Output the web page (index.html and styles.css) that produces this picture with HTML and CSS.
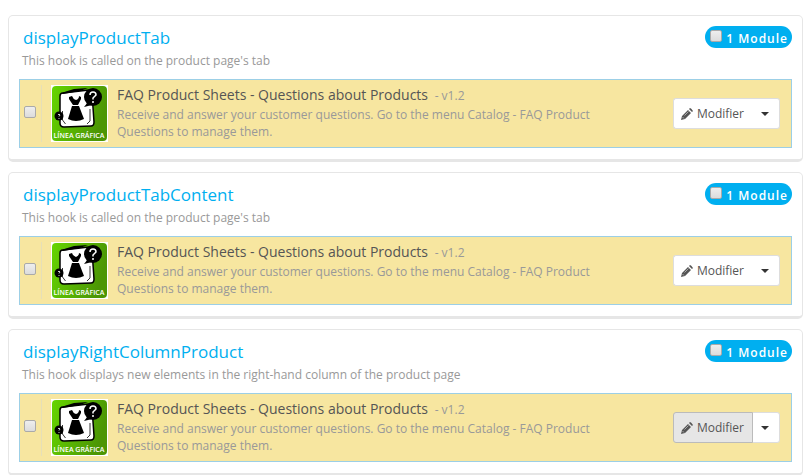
FILE: index.html
```html
<!DOCTYPE html>
<html lang="en">
<head>
    <meta charset="UTF-8">
    <meta name="viewport" content="width=device-width, initial-scale=1.0">
    <title>Positions</title>
    <link rel="stylesheet" href="styles.css">
</head>
<body>
    <!-- shared icons -->
    <svg class="sprite" aria-hidden="true">
        <defs>
            <linearGradient id="logo-green" x1="0" y1="0" x2="1" y2="0.3">
                <stop offset="0" stop-color="#66d500"/>
                <stop offset="1" stop-color="#4c9605"/>
            </linearGradient>
        </defs>
        <symbol id="module-logo" viewBox="0 0 57 57">
            <rect width="57" height="57" fill="#fff"/>
            <rect x="1" y="1" width="55" height="55" rx="4" fill="url(#logo-green)"/>
            <path d="M9 11q0-3 3-3l26-3q3 0 3 3l2 29q0 4-3 4l-27 1q-4 0-4-4z" fill="#fff" stroke="#000" stroke-width="1.5"/>
            <path d="M10 8l13-4 14-1-8 3-17 3z" fill="#000"/>
            <path d="M11.5 26v9l3 4M39 24v12l-3 3" fill="none" stroke="#000" stroke-width="0.8"/>
            <path d="M18 12l3-1q1 3 4 4 3-1 3-4l2 1v2l-3 6h-5l-4-6z"/>
            <path d="M21 21h7l5 13q-8 4-16 0z"/>
            <path d="M37 17l-4 5 8-2z"/>
            <circle cx="42" cy="12" r="9"/>
            <circle cx="8" cy="31" r="4.5"/>
            <path d="M39 10q0-3 3-3 3 0 3 3l-3 3v1.5M42 16v2" fill="none" stroke="#fff" stroke-width="1.5"/>
            <path d="M7 30q1-2 2 0l-1 1.5M8 33v1" fill="none" stroke="#fff" stroke-width="0.8"/>
        </symbol>
        <symbol id="pencil" viewBox="0 0 12 12">
            <path d="M0 12l1-4 6-6 3 3-6 6zM8 1l1-1q1 0 3 3l-1 1z"/>
            <path d="M1.5 9l1.5 1.5M3.5 7.5l4-4" fill="none" stroke="#fff" stroke-width="0.5"/>
        </symbol>
    </svg>

    <main class="hooks">
        <section class="hook-panel">
            <header class="hook-header">
                <h2 class="hook-title"><a href="#">displayProductTab</a></h2>
                <label class="badge"><input type="checkbox"> <span>1 Module</span></label>
            </header>
            <p class="hook-description">This hook is called on the product page's tab</p>
            <div class="module">
                <div class="module-select"><input type="checkbox" aria-label="Select module"></div>
                <svg class="module-logo" viewBox="0 0 57 57"><use href="#module-logo"/><text class="logo-text" x="28" y="53" text-anchor="middle">LÍNEA GRÁFICA</text></svg>
                <div class="module-info">
                    <h3 class="module-name">FAQ Product Sheets - Questions about Products <small>- v1.2</small></h3>
                    <p class="module-description">Receive and answer your customer questions. Go to the menu Catalog - FAQ Product Questions to manage them.</p>
                </div>
                <div class="btn-group">
                    <button type="button" class="btn btn-edit"><svg class="icon"><use href="#pencil"/></svg>Modifier</button>
                    <button type="button" class="btn btn-toggle" aria-label="More actions"><span class="caret"></span></button>
                </div>
            </div>
        </section>

        <section class="hook-panel">
            <header class="hook-header">
                <h2 class="hook-title"><a href="#">displayProductTabContent</a></h2>
                <label class="badge"><input type="checkbox"> <span>1 Module</span></label>
            </header>
            <p class="hook-description">This hook is called on the product page's tab</p>
            <div class="module">
                <div class="module-select"><input type="checkbox" aria-label="Select module"></div>
                <svg class="module-logo" viewBox="0 0 57 57"><use href="#module-logo"/><text class="logo-text" x="28" y="53" text-anchor="middle">LÍNEA GRÁFICA</text></svg>
                <div class="module-info">
                    <h3 class="module-name">FAQ Product Sheets - Questions about Products <small>- v1.2</small></h3>
                    <p class="module-description">Receive and answer your customer questions. Go to the menu Catalog - FAQ Product Questions to manage them.</p>
                </div>
                <div class="btn-group">
                    <button type="button" class="btn btn-edit"><svg class="icon"><use href="#pencil"/></svg>Modifier</button>
                    <button type="button" class="btn btn-toggle" aria-label="More actions"><span class="caret"></span></button>
                </div>
            </div>
        </section>

        <section class="hook-panel">
            <header class="hook-header">
                <h2 class="hook-title"><a href="#">displayRightColumnProduct</a></h2>
                <label class="badge"><input type="checkbox"> <span>1 Module</span></label>
            </header>
            <p class="hook-description">This hook displays new elements in the right-hand column of the product page</p>
            <div class="module">
                <div class="module-select"><input type="checkbox" aria-label="Select module"></div>
                <svg class="module-logo" viewBox="0 0 57 57"><use href="#module-logo"/><text class="logo-text" x="28" y="53" text-anchor="middle">LÍNEA GRÁFICA</text></svg>
                <div class="module-info">
                    <h3 class="module-name">FAQ Product Sheets - Questions about Products <small>- v1.2</small></h3>
                    <p class="module-description">Receive and answer your customer questions. Go to the menu Catalog - FAQ Product Questions to manage them.</p>
                </div>
                <div class="btn-group">
                    <button type="button" class="btn btn-edit active"><svg class="icon"><use href="#pencil"/></svg>Modifier</button>
                    <button type="button" class="btn btn-toggle" aria-label="More actions"><span class="caret"></span></button>
                </div>
            </div>
        </section>
    </main>
</body>
</html>
```
FILE: styles.css
```css
* {
    margin: 0;
    padding: 0;
    box-sizing: border-box;
}

body {
    font-family: "Open Sans", sans-serif;
    font-size: 12px;
    line-height: 17px;
    color: #555;
    background-color: #fff;
    overflow-x: hidden;
}

.sprite {
    position: absolute;
    width: 0;
    height: 0;
}

.hooks {
    display: flex;
    flex-direction: column;
    gap: 10px;
    padding: 15px 0 0 8px;
}

.hook-panel {
    padding: 10px 10px 11px;
    border: 1px solid #e6e6e6;
    border-bottom-width: 3px;
    border-radius: 5px;
}

.hook-header {
    display: flex;
    justify-content: space-between;
    align-items: flex-start;
    padding-left: 4px;
}

.hook-title {
    font-size: 17px;
    font-weight: 400;
    line-height: 24px;
}

.hook-title a {
    color: #00aff0;
    text-decoration: none;
}

.badge {
    display: flex;
    gap: 4px;
    height: 22px;
    padding: 4px 4px 4px 5px;
    border-radius: 11px;
    background-color: #00aff0;
    color: #fff;
    font-weight: 600;
    letter-spacing: 1px;
}

input[type="checkbox"] {
    appearance: none;
    width: 12px;
    height: 12px;
    border: 1px solid #aaa;
    border-radius: 2px;
    background: linear-gradient(#eee, #dcdcdc);
}

.hook-description {
    padding: 2px 3px 10px;
    color: #999;
}

.module {
    display: flex;
    align-items: center;
    padding: 5px 11px 5px 4px;
    border: 1px solid #9ccfe6;
    background-color: #f7e6a0;
}

.module-select {
    display: flex;
    align-items: center;
    align-self: stretch;
    width: 18px;
    padding-bottom: 3px;
    border-right: 1px solid #e6dfb8;
}

.module-logo {
    width: 57px;
    height: 57px;
    margin: 0 9px;
    flex-shrink: 0;
}

.logo-text {
    font-size: 7px;
    font-weight: 600;
    fill: #fff;
}

.module-info {
    flex: 1;
    max-width: 500px;
    padding-bottom: 2px;
}

.module-name {
    font-size: 14px;
    font-weight: 400;
    line-height: 20px;
}

.module-name small {
    margin-left: 3px;
    font-size: 12px;
    color: #999;
}

.module-description {
    color: #999;
}

.btn-group {
    display: flex;
    margin-left: auto;
}

.btn {
    display: flex;
    align-items: center;
    justify-content: center;
    height: 31px;
    border: 1px solid #ddd;
    background-color: #fff;
    color: #555;
    font: inherit;
    cursor: pointer;
}

.btn-edit {
    gap: 4px;
    padding: 0 9px 0 7px;
    border-right-width: 0;
    border-radius: 3px 0 0 3px;
}

.btn-edit.active {
    padding-right: 8px;
    border-color: #bbb;
    border-right-width: 1px;
    background-color: #e6e6e6;
}

.btn-toggle {
    width: 27px;
    padding-right: 3px;
    border-left: 0;
    border-radius: 0 3px 3px 0;
}

.icon {
    width: 12px;
    height: 12px;
    fill: #555;
}

.caret {
    border: 4px solid transparent;
    border-top-color: #333;
    border-bottom: 0;
}
```
